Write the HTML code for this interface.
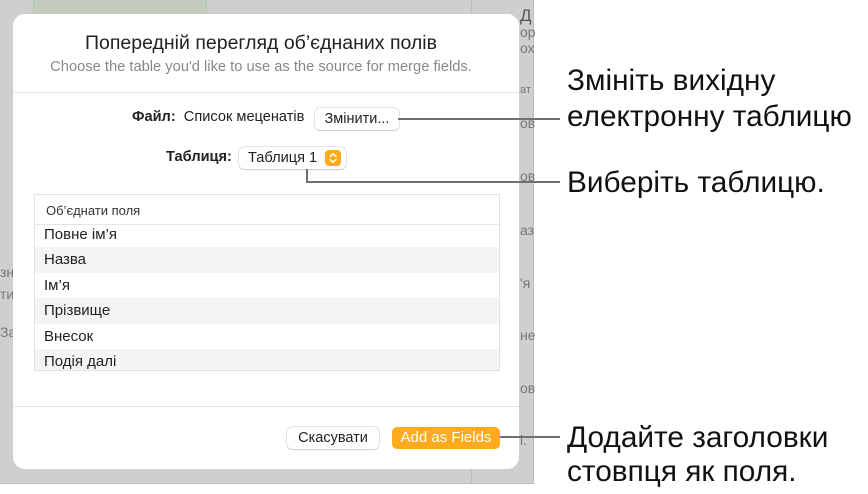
<!DOCTYPE html>
<html><head><meta charset="utf-8"><style>
*{margin:0;padding:0;box-sizing:border-box}
body{width:868px;height:494px;background:#fff;position:relative;overflow:hidden;font-family:"Liberation Sans","DejaVu Sans",sans-serif}
.bg{position:absolute;left:0;top:0;width:534px;height:484px;background:#cfcfcf;border-right:1px solid #bdbdbd;border-bottom:1px solid #bdbdbd}
.green{position:absolute;left:33px;top:0;width:174px;height:14px;background:#c3cbbf;border-left:1px solid #a9cf9f;border-right:1px solid #a9cf9f}
.col{position:absolute;left:471px;top:0;width:1px;height:484px;background:#bcbcbc}
.bt{position:absolute;color:#777;font-size:14px;white-space:nowrap}
.dlg{position:absolute;left:13px;top:14px;width:506px;height:455px;background:#fff;border-radius:12px;overflow:hidden}
.abs{position:absolute;white-space:nowrap}
.line{position:absolute;background:#707070}
.co{position:absolute;left:567px;font-size:29.8px;line-height:36px;color:#111;white-space:nowrap}
.row{position:absolute;width:466px;height:25.5px;font-size:15px;color:#222;padding-left:9px;line-height:25px}
</style></head><body>
<div class="bg"></div>
<div class="green"></div>
<div class="col"></div>
<div class="bt" style="left:520px;top:6px;font-size:17px;color:#555">Д</div>
<div class="bt" style="left:520px;top:24px">ор</div>
<div class="bt" style="left:520px;top:40px">ох</div>
<div class="bt" style="left:520px;top:84px;font-size:11px">ат</div>
<div class="bt" style="left:520px;top:115px">ов</div>
<div class="bt" style="left:520px;top:168px">ов</div>
<div class="bt" style="left:520px;top:222px">аз</div>
<div class="bt" style="left:520px;top:275px">'я</div>
<div class="bt" style="left:520px;top:327px">не</div>
<div class="bt" style="left:520px;top:380px">ов</div>
<div class="bt" style="left:520px;top:432px">і.</div>
<div class="bt" style="left:0px;top:264px">зн</div>
<div class="bt" style="left:0px;top:286px">ти</div>
<div class="bt" style="left:0px;top:324px">За</div>

<div class="dlg">
  <div class="abs" style="left:0;width:496px;top:18px;text-align:center;font-size:19.5px;color:#222">Попередній перегляд об’єднаних полів</div>
  <div class="abs" style="left:0;width:496px;top:45px;text-align:center;font-size:14.7px;color:#888">Choose the table you'd like to use as the source for merge fields.</div>
  <div class="abs" style="left:0;top:78px;width:506px;height:1px;background:#e4e4e4"></div>
  <div class="abs" style="left:119px;top:95px;font-size:14.6px;color:#222"><b>Файл:</b>&nbsp; Список меценатів</div>
  <div class="abs" style="left:302px;top:94px;width:84px;height:22px;border-radius:5px;background:#fff;box-shadow:0 0 0 .5px #c8c8c8,0 1px 1px #ccc;font-size:14.5px;text-align:center;line-height:22px;color:#222">Змінити...</div>
  <div class="abs" style="left:153px;top:135px;font-size:14.6px;color:#222;font-weight:bold">Таблиця:</div>
  <div class="abs" style="left:226px;top:133px;width:107px;height:22px;border-radius:5px;background:#fff;box-shadow:0 0 0 .5px #c8c8c8,0 1px 1px #ccc;font-size:14.6px;line-height:22px;padding-left:9px;color:#222">Таблиця 1
    <div style="position:absolute;right:5px;top:3px;width:16px;height:16px;border-radius:4px;background:#fcab1f">
      <svg width="16" height="16" viewBox="0 0 16 16" style="position:absolute;left:0;top:0"><path d="M5 6.5L8 3.8L11 6.5M5 9.5L8 12.2L11 9.5" stroke="#fff" stroke-width="1.5" fill="none" stroke-linecap="round"/></svg>
    </div>
  </div>
  <div class="abs" style="left:21px;top:180px;width:466px;height:177px;border:1px solid #e2e2e2;background:#fff;overflow:hidden">
    <div class="abs" style="left:11px;top:8px;font-size:13px;color:#333">Об’єднати поля</div>
    <div class="abs" style="left:0;top:29px;width:466px;height:1px;background:#e6e6e6"></div>
    <div class="row" style="top:30px;left:0;background:#fff;line-height:19px">Повне ім’я</div>
    <div class="row" style="top:52px;left:0;background:#f3f4f3">Назва</div>
    <div class="row" style="top:77.5px;left:0;background:#fff">Ім’я</div>
    <div class="row" style="top:103px;left:0;background:#f3f4f3">Прізвище</div>
    <div class="row" style="top:128.5px;left:0;background:#fff">Внесок</div>
    <div class="row" style="top:154px;left:0;background:#f3f4f3">Подія далі</div>
  </div>
  <div class="abs" style="left:0;top:392px;width:506px;height:1px;background:#e4e4e4"></div>
  <div class="abs" style="left:274px;top:413px;width:92px;height:22px;border-radius:5px;background:#fff;box-shadow:0 0 0 .5px #c8c8c8,0 1px 1px #ccc;font-size:14.5px;text-align:center;line-height:22px;color:#222">Скасувати</div>
  <div class="abs" style="left:379px;top:413px;width:108px;height:22px;border-radius:5px;background:#fdab1d;font-size:15px;text-align:center;line-height:22px;color:#fff">Add as Fields</div>
</div>

<div class="line" style="left:398px;top:118px;width:162px;height:2px"></div>
<div class="line" style="left:306px;top:169px;width:2px;height:14px"></div>
<div class="line" style="left:306px;top:181px;width:254px;height:2px"></div>
<div class="line" style="left:500px;top:436px;width:60px;height:2px"></div>

<div class="co" style="top:63px">Змініть вихідну</div>
<div class="co" style="top:99px">електронну таблицю</div>
<div class="co" style="top:165px">Виберіть таблицю.</div>
<div class="co" style="top:420px">Додайте заголовки</div>
<div class="co" style="top:454px">стовпця як поля.</div>
</body></html>
